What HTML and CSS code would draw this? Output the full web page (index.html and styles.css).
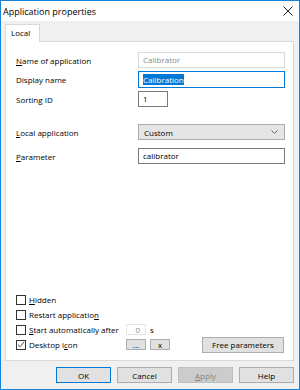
FILE: index.html
```html
<!DOCTYPE html>
<html lang="en">
<head>
  <meta charset="UTF-8" />
  <title>Application properties</title>
  <link rel="stylesheet" href="styles.css">
</head>
<body>
  <div class="window">
    <div class="titlebar">
      <span class="title">Application properties</span>
      <svg class="close" width="10" height="10" viewBox="0 0 10 10">
        <path d="M0.5 0.5 L9.5 9.5 M9.5 0.5 L0.5 9.5" stroke="#222" stroke-width="1" fill="none"/>
      </svg>
    </div>

    <div class="client">
      <div class="tabs">
        <div class="tab">Local</div>
      </div>

      <div class="panel">
        <div class="row r1">
          <label><u>N</u>ame of application</label>
          <div class="input disabled">Calibrator</div>
        </div>
        <div class="row r2">
          <label>Display name</label>
          <div class="input focused"><span class="sel">Calibration</span></div>
        </div>
        <div class="row r3">
          <label>Sorting ID</label>
          <div class="input short">1</div>
        </div>
        <div class="row r4">
          <label><u>L</u>ocal application</label>
          <div class="select">
            <span>Custom</span>
            <svg width="7" height="4" viewBox="0 0 7 4">
              <path d="M0.5 0.5 L3.5 3.5 L6.5 0.5" stroke="#666" stroke-width="1" fill="none"/>
            </svg>
          </div>
        </div>
        <div class="row r5">
          <label><u>P</u>arameter</label>
          <div class="input">calibrator</div>
        </div>

        <div class="options">
          <div class="opt">
            <span class="check"></span><span class="text"><u>H</u>idden</span>
          </div>
          <div class="opt">
            <span class="check"></span><span class="text">Restart applicatio<u>n</u></span>
          </div>
          <div class="opt">
            <span class="check"></span><span class="text cap"><u>S</u>tart automatically after</span>
            <div class="small-input">0</div>
            <span class="unit">s</span>
          </div>
          <div class="opt">
            <span class="check checked">
              <svg width="9" height="9" viewBox="0 0 9 9">
                <path d="M1 4.5 L3.5 7 L8 1.5" stroke="#333" stroke-width="1" fill="none"/>
              </svg>
            </span><span class="text cap">Desktop i<u>c</u>on</span>
            <button class="mini">...</button>
            <button class="mini">x</button>
            <button class="btn free">Free parameters</button>
          </div>
        </div>
      </div>

      <div class="buttons">
        <button class="btn default">OK</button>
        <button class="btn">Cancel</button>
        <button class="btn disabled"><u>A</u>pply</button>
        <button class="btn">Help</button>
      </div>
    </div>
  </div>
</body>
</html>
```

FILE: styles.css
```css
* {
  box-sizing: border-box;
}
body {
  margin: 0;
  font-family: 'Open Sans', 'Noto Sans', sans-serif;
  font-size: 8px;
  color: #000;
}
.window {
  width: 300px;
  height: 390px;
  border: 1px solid #1883d7;
  background: #f0f0f0;
  display: flex;
  flex-direction: column;
}
.titlebar {
  height: 20px;
  background: #fff;
  display: flex;
  align-items: center;
  justify-content: space-between;
  padding: 0 6px 0 2px;
}
.title {
  font-size: 9px;
}
.close {
  margin-top: -1px;
}
.client {
  flex: 1;
  padding: 3px 5px 0 4px;
  display: flex;
  flex-direction: column;
}
.tabs {
  display: flex;
  height: 17px;
}
.tab {
  width: 35px;
  height: 18px;
  background: #fff;
  border: 1px solid #d9d9d9;
  border-bottom: none;
  padding: 2px 0 0 5px;
  position: relative;
  z-index: 1;
}
.panel {
  height: 320px;
  background: #fff;
  border: 1px solid #d9d9d9;
  display: flex;
  flex-direction: column;
  padding: 0 8px 8px 10px;
}
.row {
  display: flex;
  align-items: center;
}
.row label {
  width: 122px;
}
.r1 { margin-top: 10px; }
.r2 { margin-top: 3px; }
.r3 { margin-top: 3px; }
.r4 { margin-top: 17px; }
.r5 { margin-top: 8px; }
.input {
  flex: 1;
  height: 16px;
  border: 1px solid #7a7a7a;
  padding: 1px 0 0 4px;
  line-height: 12px;
  background: #fff;
}
.r2 .input {
  height: 17px;
}
.input.disabled {
  border-color: #d9d9d9;
  color: #8a8a8a;
}
.input.focused {
  border-color: #0078d7;
  padding-top: 2px;
}
.input.short {
  flex: none;
  width: 30px;
}
.sel {
  background: #0078d7;
  color: #fff;
}
.select {
  flex: 1;
  height: 16px;
  background: #e5e5e5;
  border: 1px solid #adadad;
  display: flex;
  align-items: center;
  justify-content: space-between;
  padding: 0 6px 0 5px;
}
.options {
  margin-top: auto;
  display: flex;
  flex-direction: column;
}
.opt {
  display: flex;
  align-items: center;
  height: 15px;
}
.check {
  width: 10px;
  height: 10px;
  border: 1px solid #333;
  background: #fff;
  margin-right: 3px;
  display: flex;
  align-items: center;
  justify-content: center;
}
.text.cap {
  width: 97px;
}
.small-input {
  width: 20px;
  height: 11px;
  border: 1px solid #e3e3e3;
  color: #8a8a8a;
  text-align: right;
  padding-right: 5px;
  line-height: 9px;
}
.unit {
  margin-left: 4px;
}
button {
  font-family: inherit;
  font-size: 8px;
  color: #000;
  padding: 0;
}
.mini {
  width: 20px;
  height: 11px;
  background: #e1e1e1;
  border: 1px solid #adadad;
  margin-right: 4px;
  line-height: 8px;
}
.btn {
  width: 55px;
  height: 16px;
  background: #e1e1e1;
  border: 1px solid #adadad;
}
.free {
  width: 82px;
  margin-left: auto;
  margin-right: 1px;
}
.buttons {
  display: flex;
  justify-content: flex-end;
  gap: 6px;
  margin-top: 6px;
}
.btn.default {
  border-color: #0078d7;
}
.btn.disabled {
  background: #cccccc;
  border-color: #bfbfbf;
  color: #838383;
}
```
